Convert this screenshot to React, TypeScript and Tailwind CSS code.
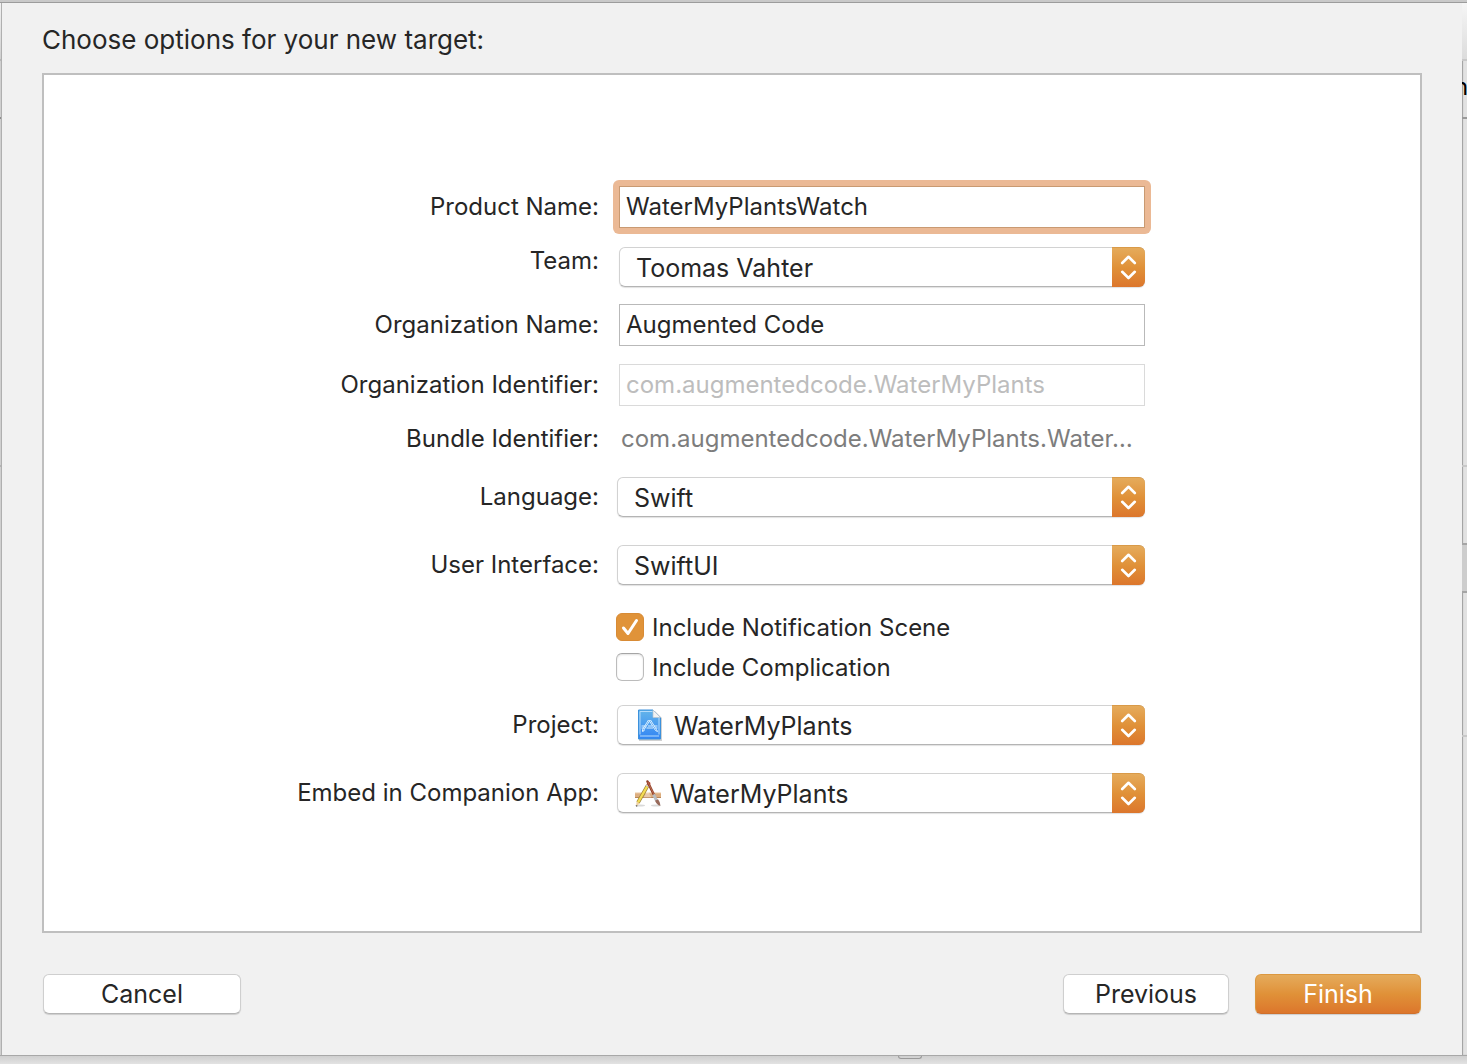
import type { ReactNode } from "react";

const popup =
  "h-10 w-full appearance-none rounded-md border border-[#d2d2d2] border-b-[#b4b4b4] bg-white pt-0.5 pr-10 text-[25px] leading-8 text-[#262626] shadow-[0_1px_1px_rgba(0,0,0,0.12)] outline-none";

function Row({ id, label, className, children }: { id: string; label: string; className: string; children: ReactNode }) {
  return (
    <div className={`grid grid-cols-[573fr_528px_275fr] ${className}`}>
      <label htmlFor={id} className="whitespace-nowrap pr-[18px] text-right leading-[30px]">
        {label}
      </label>
      <div>{children}</div>
    </div>
  );
}

function Popup({ id, value, indent, icon }: { id: string; value: string; indent: string; icon?: ReactNode }) {
  return (
    <div className="relative">
      <select id={id} className={`${popup} ${indent}`} defaultValue={value}>
        <option>{value}</option>
      </select>
      {icon}
      <span className="pointer-events-none absolute inset-y-0 right-0 flex w-[33px] items-center justify-center rounded-r-md border-t border-[#d99a48] bg-linear-to-b from-[#e5ab5b] via-[#e09138] to-[#dc762c]">
        <svg width="17" height="26" viewBox="0 0 17 26" fill="none" stroke="#fff" strokeWidth="2.6" strokeLinecap="round" strokeLinejoin="round">
          <path d="M2.200 8 8.500 1.800 14.800 8M2.200 16.800 8.500 23l6.300-6.200" />
        </svg>
      </span>
    </div>
  );
}

function ProjectIcon() {
  return (
    <svg className="pointer-events-none absolute top-[4px] left-[20px]" width="26" height="33" viewBox="0 0 26 33" fill="none">
      <defs>
        <linearGradient id="doc" x1="0" y1="0" x2="0" y2="1">
          <stop offset="0" stopColor="#64b5ea" />
          <stop offset="1" stopColor="#3285f4" />
        </linearGradient>
      </defs>
      <path d="M2 2h16l7 7v23H2z" fill="#000" opacity=".18" />
      <path d="M1.500 1H16l7.500 7.500v21.500h-22z" fill="url(#doc)" stroke="#3c91dc" />
      <path d="M3 2.500h12.500M3 2.500V25.500M22 9v16.500M3 27h19" stroke="#b5dcfb" strokeWidth="1" />
      <path d="M16 1v7.500h7.500z" fill="#f2f2f2" stroke="#b7c5d0" strokeWidth=".7" />
      <path d="M13.200 11 6.500 21.500M11.800 11l6.700 10.500M11.500 11 5.500 20.500M13.500 11l6 9.500M4.500 17h4.500M11 17h4M17 17h3.500M4.500 19h3M9.500 19h6.500M18.500 19h2M5.500 20.500v2l2-1M19.500 20.500l1 2-2-1" stroke="#d9efff" strokeWidth="1" />
    </svg>
  );
}

function AppIcon() {
  return (
    <svg className="pointer-events-none absolute top-[7px] left-[17px]" width="28" height="28" viewBox="0 0 28 28" fill="none">
      <ellipse cx="6" cy="25.500" rx="5" ry="1" fill="#000" opacity=".15" />
      <ellipse cx="22" cy="25.500" rx="5" ry="1" fill="#000" opacity=".15" />
      <path d="M1 13h26v4.500H1z" fill="#dcae80" />
      <path d="M1 13h26" stroke="#ebc7a0" />
      <path d="M1 17.500h26" stroke="#b98557" />
      <path d="m9.500 17.500 4-7 4 7z" fill="#fff" opacity=".35" />
      <path d="M13.700 5.500 4 22.500" stroke="#9c8233" strokeWidth="3.600" />
      <path d="M13.700 5.500 4 22.500" stroke="#f5dd55" strokeWidth="2.400" />
      <path d="m14.900 3.400-.8 1.400" stroke="#d8614c" strokeWidth="3.200" strokeLinecap="round" />
      <path d="m13.900 5.200-.7 1.200" stroke="#c9cdd0" strokeWidth="3.400" />
      <path d="m2.500 21.600 3.100 1.800-3.400 3z" fill="#eed0a0" />
      <path d="m2.300 25-.1 1.800 1.500-.9z" fill="#333" />
      <path d="m13.500 1.500 6.500 13.500" stroke="#8e3f28" strokeWidth="2.500" strokeLinecap="round" />
      <path d="m13.900 2 6 12.500" stroke="#c5765a" strokeWidth=".8" />
      <path d="m19.600 14.500 2.900 6" stroke="#b9bec2" strokeWidth="2.900" />
      <path d="m21 20.700 3-1.400c1.300 2 2.500 4 2.200 6.500-2.400-.6-4.100-2.400-5.200-5.100" fill="#97695a" />
    </svg>
  );
}

function Check({ label, checked, className }: { label: string; checked?: boolean; className: string }) {
  return (
    <div className={`grid grid-cols-[573fr_528px_275fr] ${className}`}>
      <label className="relative col-start-2 -ml-px flex h-7 items-center gap-2">
        <input
          type="checkbox"
          defaultChecked={checked}
          className="peer size-7 appearance-none rounded-md border border-[#bcbcbc] border-t-[#a5a5a5] bg-white shadow-[inset_0_1px_2px_rgba(0,0,0,0.12)] checked:border-[#d88b35] checked:bg-[#e09339] checked:shadow-none"
        />
        <svg className="pointer-events-none absolute top-0 left-0 hidden peer-checked:block" width="28" height="28" viewBox="0 0 28 28" fill="none">
          <path d="m7.500 15 4.500 5.500L20.500 7.500" stroke="#fff" strokeWidth="3" strokeLinecap="round" strokeLinejoin="round" />
        </svg>
        <span className="pt-0.5 leading-7">{label}</span>
      </label>
    </div>
  );
}

const field = "block h-[42px] w-[526px] border px-1.5 pb-0.5 outline-none";
const button = "h-10 rounded-md border text-[25px] leading-8 shadow-[0_1px_1px_rgba(0,0,0,0.15)]";

function LeftStrip() {
  return (
    <div className="flex w-0.5 shrink-0 flex-col border-r border-[#b0b0b0] bg-[#d0d0d0]">
      <div className="h-14 bg-linear-to-b from-[#f2f2f2] to-[#d0d0d0]" />
      <div className="h-[60px] border-y-2 border-t-[#b8b8b8] border-b-[#8e8e8e]" />
      <div className="h-[346px]" />
      <div className="h-0.5 bg-[#b4b4b4]" />
    </div>
  );
}

function RightStrip() {
  return (
    <div className="flex w-[5px] shrink-0 flex-col overflow-hidden bg-[#e2e2e2] shadow-[inset_1px_0_1px_rgba(0,0,0,0.3)]">
      <div className="h-14 bg-linear-to-b from-[#f6f6f6] to-[#dcdcdc]" />
      <div className="flex h-[60px] items-center border-y-2 border-t-[#c8c8c8] border-b-[#9a9a9a] pb-1 text-[24px] text-black">
        <span className="-ml-2">n</span>
      </div>
      <div className="h-[346px]" />
      <div className="h-[78px] border-t-2 border-[#c8c8c8]" />
      <div className="h-[50px] border-y-2 border-[#a5a5a5] bg-[#cdcdcd]" />
      <div className="h-[142px]" />
      <div className="grow border-t-2 border-[#c8c8c8]" />
    </div>
  );
}

export default function App() {
  return (
    <div className="flex min-h-screen flex-col bg-[#dcdcdc] font-[Inter,sans-serif] text-[24px] text-[#262626]">
      <div className="h-[3px] border-b border-[#9c9c9c] bg-[#c9c9c9]" />
      <div className="flex grow">
        <LeftStrip />
        <main className="flex grow flex-col bg-[#f1f1f1] px-10 pt-5 pb-[41px]">
          <h1 className="text-[26px] leading-[34px]">Choose options for your new target:</h1>
          <section className="mt-4 grow border-2 border-[#bfbfbf] bg-white pt-[111px] pb-[118px]">
            <Row id="product" label="Product Name:" className="[&>label]:leading-[42px]">
              <div className="-my-1.5 -ml-1 w-[538px] rounded-md bg-[#ebb995] p-1.5">
                <input id="product" defaultValue="WaterMyPlantsWatch" className={`${field} border-[#c99a72] bg-white`} />
              </div>
            </Row>
            <Row id="team" label="Team:" className="mt-[19px] [&>label]:leading-7">
              <div className="pl-0.5">
                <Popup id="team" value="Toomas Vahter" indent="pl-4" />
              </div>
            </Row>
            <Row id="org" label="Organization Name:" className="mt-[17px] [&>label]:leading-[42px]">
              <input id="org" defaultValue="Augmented Code" className={`${field} ml-0.5 border-[#b9b9b9]`} />
            </Row>
            <Row id="orgid" label="Organization Identifier:" className="mt-[18px] [&>label]:leading-[42px]">
              <input id="orgid" disabled defaultValue="com.augmentedcode.WaterMyPlants" className={`${field} ml-0.5 border-[#dadada] text-[#bdbdbd]`} />
            </Row>
            <Row id="bundle" label="Bundle Identifier:" className="mt-[18px]">
              <output id="bundle" className="block whitespace-nowrap pl-1 leading-[30px] text-[#7d7d7d]">
                com.augmentedcode.WaterMyPlants.Water…
              </output>
            </Row>
            <Row id="language" label="Language:" className="mt-[23px] [&>label]:leading-10">
              <Popup id="language" value="Swift" indent="pl-4" />
            </Row>
            <Row id="ui" label="User Interface:" className="mt-7 [&>label]:leading-10">
              <Popup id="ui" value="SwiftUI" indent="pl-4" />
            </Row>
            <Check label="Include Notification Scene" checked className="mt-7" />
            <Check label="Include Complication" className="mt-3" />
            <Row id="project" label="Project:" className="mt-6 [&>label]:leading-10">
              <Popup id="project" value="WaterMyPlants" indent="pl-14" icon={<ProjectIcon />} />
            </Row>
            <Row id="embed" label="Embed in Companion App:" className="mt-7 [&>label]:leading-10">
              <Popup id="embed" value="WaterMyPlants" indent="pl-[52px]" icon={<AppIcon />} />
            </Row>
          </section>
          <footer className="mt-[41px] flex px-px">
            <button className={`${button} w-[198px] border-[#cfcfcf] border-b-[#b5b5b5] bg-white`}>Cancel</button>
            <button className={`${button} mr-[26px] ml-auto w-[166px] border-[#cfcfcf] border-b-[#b5b5b5] bg-white`}>Previous</button>
            <button className={`${button} w-[166px] border-[#dc983f] border-b-[#d0702b] bg-linear-to-b from-[#e5ab5b] via-[#e09138] to-[#dc762c] text-white`}>Finish</button>
          </footer>
        </main>
        <RightStrip />
      </div>
      <div className="h-[9px] border-t border-[#a8a8a8] bg-linear-to-b from-[#cfcfcf] to-[#e2e2e2]">
        <div className="ml-[898px] h-[3px] w-6 rounded-b-md border border-t-0 border-[#999]" />
      </div>
    </div>
  );
}
